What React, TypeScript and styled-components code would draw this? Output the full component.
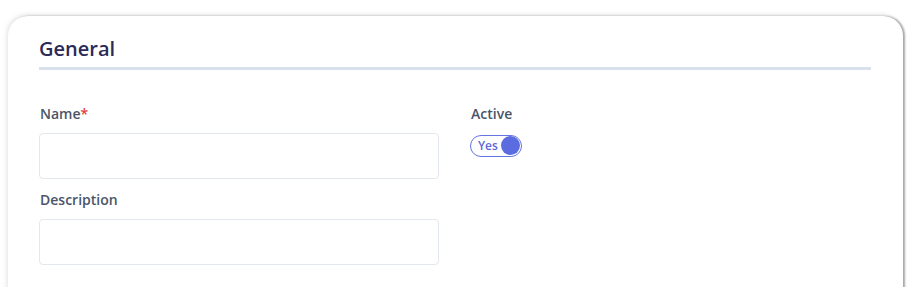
import React from "react";
import styled, { createGlobalStyle } from "styled-components";

const Global = createGlobalStyle`
  html, body { margin: 0; padding: 0; background: #ffffff; }
  body { font-family: "Open Sans", "Noto Sans", sans-serif; }
`;

const Viewport = styled.div`
  height: 287px;
  overflow: hidden;
  padding: 16px 10px 0 8px;
  box-sizing: border-box;
`;

const Card = styled.section`
  background: #ffffff;
  border-radius: 20px 20px 0 0;
  min-height: 320px;
  box-shadow: 2px 0 2px rgba(0, 0, 0, 0.32), -1px -1px 5px rgba(0, 0, 0, 0.12);
  padding: 20px 32px 0 31px;
  box-sizing: border-box;
`;

const Title = styled.h2`
  margin: 0;
  font-size: 20px;
  font-weight: 600;
  color: #2b2a58;
  line-height: 26px;
  padding-bottom: 5px;
  border-bottom: 3px solid #d9e1ec;
`;

const Grid = styled.div`
  display: grid;
  grid-template-columns: 400px 1fr;
  column-gap: 31px;
  padding-top: 34px;
`;

const Column = styled.div`
  display: flex;
  flex-direction: column;
`;

const Field = styled.div`
  display: flex;
  flex-direction: column;
  margin-bottom: 11px;
`;

const Label = styled.label`
  font-size: 14px;
  font-weight: 600;
  color: #4a5568;
  line-height: 20px;
  margin-bottom: 9px;
  margin-left: 1px;
`;

const Required = styled.span`
  color: #e53e3e;
`;

const Input = styled.input`
  height: 46px;
  box-sizing: border-box;
  border: 1px solid #e3e8ee;
  border-radius: 4px;
  background: #fff;
  outline: none;
  font: inherit;
  padding: 0 12px;
`;

const Toggle = styled.button`
  display: inline-flex;
  align-items: center;
  justify-content: space-between;
  width: 52px;
  height: 22px;
  box-sizing: border-box;
  border: 1px solid #6574e0;
  border-radius: 11px;
  background: #fff;
  padding: 0 1px 0 7px;
  margin-top: -4px;
  cursor: pointer;
  font-family: "Open Sans", "Noto Sans", sans-serif;
  font-size: 12px;
  font-weight: 600;
  color: #5a67d8;
`;

const Knob = styled.span`
  width: 19px;
  height: 19px;
  border-radius: 50%;
  background: #5b6ce1;
`;

export default function App() {
  return (
    <>
      <Global />
      <Viewport>
        <Card>
          <Title>General</Title>
          <Grid>
            <Column>
              <Field>
                <Label>
                  Name<Required>*</Required>
                </Label>
                <Input />
              </Field>
              <Field>
                <Label>Description</Label>
                <Input />
              </Field>
            </Column>
            <Column>
              <Field>
                <Label>Active</Label>
                <div>
                  <Toggle type="button">
                    Yes
                    <Knob />
                  </Toggle>
                </div>
              </Field>
            </Column>
          </Grid>
        </Card>
      </Viewport>
    </>
  );
}
